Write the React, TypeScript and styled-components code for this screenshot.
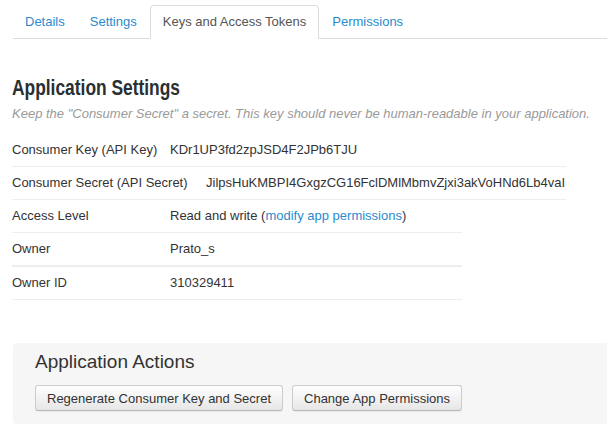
import React from "react";
import styled, { createGlobalStyle } from "styled-components";

const Global = createGlobalStyle`
  html, body { margin: 0; padding: 0; background: #fff; overflow: hidden; }
  body { font-family: "Liberation Sans", Arial, sans-serif; font-size: 13px; color: #333; }
`;

const Page = styled.div`
  width: 607px;
  height: 435px;
  padding-top: 5px;
  box-sizing: border-box;
`;

const Tabs = styled.ul`
  display: flex;
  list-style: none;
  margin: 0 0 0 13px;
  padding: 0;
  border-bottom: 1px solid #ddd;
`;

const Tab = styled.li<{ $active?: boolean }>`
  margin: 0 1px -1px 0;
  padding: 7px ${(p) => (p.$active ? 12 : 11)}px 8px;
  line-height: 17px;
  border: 1px solid ${(p) => (p.$active ? "#ddd" : "transparent")};
  border-bottom-color: ${(p) => (p.$active ? "#fff" : "transparent")};
  border-radius: 4px 4px 0 0;
  background: ${(p) => (p.$active ? "#fff" : "transparent")};
  color: ${(p) => (p.$active ? "#555" : "#2a8bcd")};
  cursor: pointer;
`;

const Section = styled.div`
  padding: 0 12px;
`;

const Heading = styled.h2`
  display: inline-block;
  margin: 36px 0 0;
  font-family: "Liberation Sans", Arial, sans-serif;
  font-weight: bold;
  font-size: 22px;
  line-height: 26px;
  color: #292f33;
  transform: scaleX(0.79);
  transform-origin: left center;
  white-space: nowrap;
`;

const Note = styled.p`
  margin: 4px 0 12px;
  font-style: italic;
  color: #9a9a9a;
  line-height: 17px;
`;

const Group = styled.div<{ $width: number }>`
  width: ${(p) => p.$width}px;
`;

const Row = styled.div<{ $thick?: boolean }>`
  display: flex;
  align-items: center;
  padding: 8px 0;
  line-height: 16px;
  border-bottom: ${(p) => (p.$thick ? "2px solid #eee" : "1px solid #eee")};
`;

const Label = styled.span<{ $width?: number }>`
  flex: none;
  width: ${(p) => p.$width ?? 158}px;
  color: #333;
`;

const Value = styled.span`
  color: #333;
  white-space: nowrap;
`;

const Link = styled.a`
  color: #2a8bcd;
  text-decoration: none;
`;

const Actions = styled.div`
  margin: 43px -10px 0 13px;
  padding: 8px 22px 13px;
  background: #f6f6f6;
  border-radius: 4px;
`;

const ActionsTitle = styled.h3`
  margin: 0;
  font-weight: normal;
  font-size: 19px;
  line-height: 22px;
  color: #333;
`;

const ButtonRow = styled.div`
  display: flex;
  gap: 9px;
  margin-top: 12px;
`;

const Button = styled.button`
  font-family: "Liberation Sans", Arial, sans-serif;
  font-size: 13px;
  color: #333;
  height: 26px;
  padding: 0 11px;
  border: 1px solid #ccc;
  border-bottom-color: #b8b8b8;
  border-radius: 3px;
  background: linear-gradient(#fff, #e6e6e6);
  box-shadow: 0 1px 1px rgba(0, 0, 0, 0.05);
  cursor: pointer;
`;

export default function App() {
  return (
    <Page>
      <Global />
      <Tabs>
        <Tab>Details</Tab>
        <Tab>Settings</Tab>
        <Tab $active>Keys and Access Tokens</Tab>
        <Tab>Permissions</Tab>
      </Tabs>
      <Section>
        <Heading>Application Settings</Heading>
        <Note>Keep the "Consumer Secret" a secret. This key should never be human-readable in your application.</Note>
        <Group $width={554}>
          <Row>
            <Label>Consumer Key (API Key)</Label>
            <Value>KDr1UP3fd2zpJSD4F2JPb6TJU</Value>
          </Row>
          <Row>
            <Label $width={194}>Consumer Secret (API Secret)</Label>
            <Value>JilpsHuKMBPI4GxgzCG16FclDMlMbmvZjxi3akVoHNd6Lb4vaI</Value>
          </Row>
        </Group>
        <Group $width={450}>
          <Row>
            <Label>Access Level</Label>
            <Value>
              Read and write (<Link href="#">modify app permissions</Link>)
            </Value>
          </Row>
          <Row $thick>
            <Label>Owner</Label>
            <Value>Prato_s</Value>
          </Row>
          <Row>
            <Label>Owner ID</Label>
            <Value>310329411</Value>
          </Row>
        </Group>
      </Section>
      <Actions>
        <ActionsTitle>Application Actions</ActionsTitle>
        <ButtonRow>
          <Button>Regenerate Consumer Key and Secret</Button>
          <Button>Change App Permissions</Button>
        </ButtonRow>
      </Actions>
    </Page>
  );
}
